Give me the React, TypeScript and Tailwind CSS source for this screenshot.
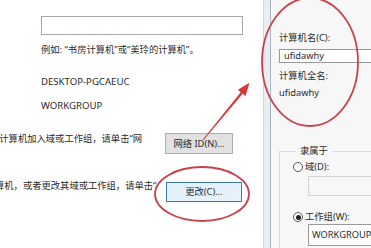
import React from 'react';

const FONT = { fontFamily: '"Noto Sans", "Noto Sans CJK SC", sans-serif' };

function Radio({ checked }: { checked?: boolean }) {
  return (
    <span className="w-[10px] h-[10px] rounded-full border border-[#555] bg-white flex items-center justify-center shrink-0">
      {checked && <span className="w-[5px] h-[5px] rounded-full bg-[#222]" />}
    </span>
  );
}

function Overlay() {
  // red marks drawn over the screenshot: two ellipses and an arrow
  return (
    <svg className="absolute inset-0 pointer-events-none" width="371" height="248" viewBox="0 0 371 248">
      <ellipse cx="202" cy="194" rx="47" ry="27" fill="none" stroke="#c8424b" strokeWidth="1.8" />
      <ellipse cx="310" cy="62" rx="48" ry="64" fill="none" stroke="#c8424b" strokeWidth="1.8" />
      <polygon
        points="203.4,140.3 202.6,139.7 240.7,92.2 237.9,89.8 249.5,82.8 245.5,96.2 242.7,93.8"
        fill="#d8383a"
      />
    </svg>
  );
}

export default function App() {
  return (
    <div className="relative w-[371px] h-[248px] overflow-hidden flex text-[9.3px] leading-[12px] text-[#2b2b2b]" style={FONT}>
      {/* left dialog */}
      <div className="w-[263px] h-full bg-white flex flex-col pt-[16px] overflow-hidden">
        <div className="ml-[41px] w-[202px] h-[19px] border border-[#a9a9a9] bg-white" />
        <div className="ml-[41px] mt-[9px] whitespace-nowrap">例如: “书房计算机”或“美玲的计算机”。</div>
        <div className="ml-[41px] mt-[20px] text-[9.6px]">DESKTOP-PGCAEUC</div>
        <div className="ml-[41px] mt-[12px] text-[9.6px]">WORKGROUP</div>

        <div className="mt-[21px] flex items-start">
          <div className="w-[165px] overflow-hidden">
            <span className="block whitespace-nowrap ml-[-10px]">将计算机加入域或工作组，请单击“网</span>
          </div>
          <div className="w-[68px] h-[21px] bg-[#e1e1e1] border border-[#adadad] flex items-center justify-center">
            网络 ID(N)...
          </div>
        </div>

        <div className="mt-[26px] flex items-start">
          <div className="w-[166px] overflow-hidden">
            <span className="block whitespace-nowrap ml-[-5px]">算机，或者更改其域或工作组，请单击“</span>
          </div>
          <div className="mt-[2px] w-[76px] h-[20px] bg-[#e5f1fb] border border-[#3b79ad] flex items-center justify-center">
            更改(C)...
          </div>
        </div>
      </div>

      {/* frame of second dialog */}
      <div className="w-[8px] h-full bg-[#ebedef] border-l border-[#d6d6d6] border-r border-r-[#a7b6c8]" />

      {/* right dialog */}
      <div className="flex-1 h-full bg-[#f7f7f7] flex flex-col pt-[32px] pl-[8px] overflow-hidden">
        <div className="whitespace-nowrap">计算机名(C):</div>
        <div className="mt-[5px] w-[120px] h-[20px] bg-white border border-[#9a9a9a] pl-[4px] flex items-center">ufidawhy</div>
        <div className="mt-[7px] whitespace-nowrap">计算机全名:</div>
        <div className="mt-[5px]">ufidawhy</div>

        <fieldset className="mt-[46px] w-[120px] border border-[#dcdcdc] pl-[13px] pb-[20px]">
          <legend className="ml-[3px] px-[4px] leading-[12px]">隶属于</legend>
          <div className="mt-[4px] flex items-center gap-[2px]">
            <Radio />
            <span>域(D):</span>
          </div>
          <div className="mt-[3px] ml-[15px] w-[100px] h-[20px] bg-[#f7f7f7] border border-[#d4d4d4]" />
          <div className="mt-[15px] flex items-center gap-[2px]">
            <Radio checked />
            <span>工作组(W):</span>
          </div>
          <div className="mt-[1px] ml-[15px] w-[100px] h-[22px] bg-white border border-[#9a9a9a] pl-[3px] flex items-center text-[9.3px]">
            WORKGROUP
          </div>
        </fieldset>
      </div>

      <Overlay />
    </div>
  );
}
